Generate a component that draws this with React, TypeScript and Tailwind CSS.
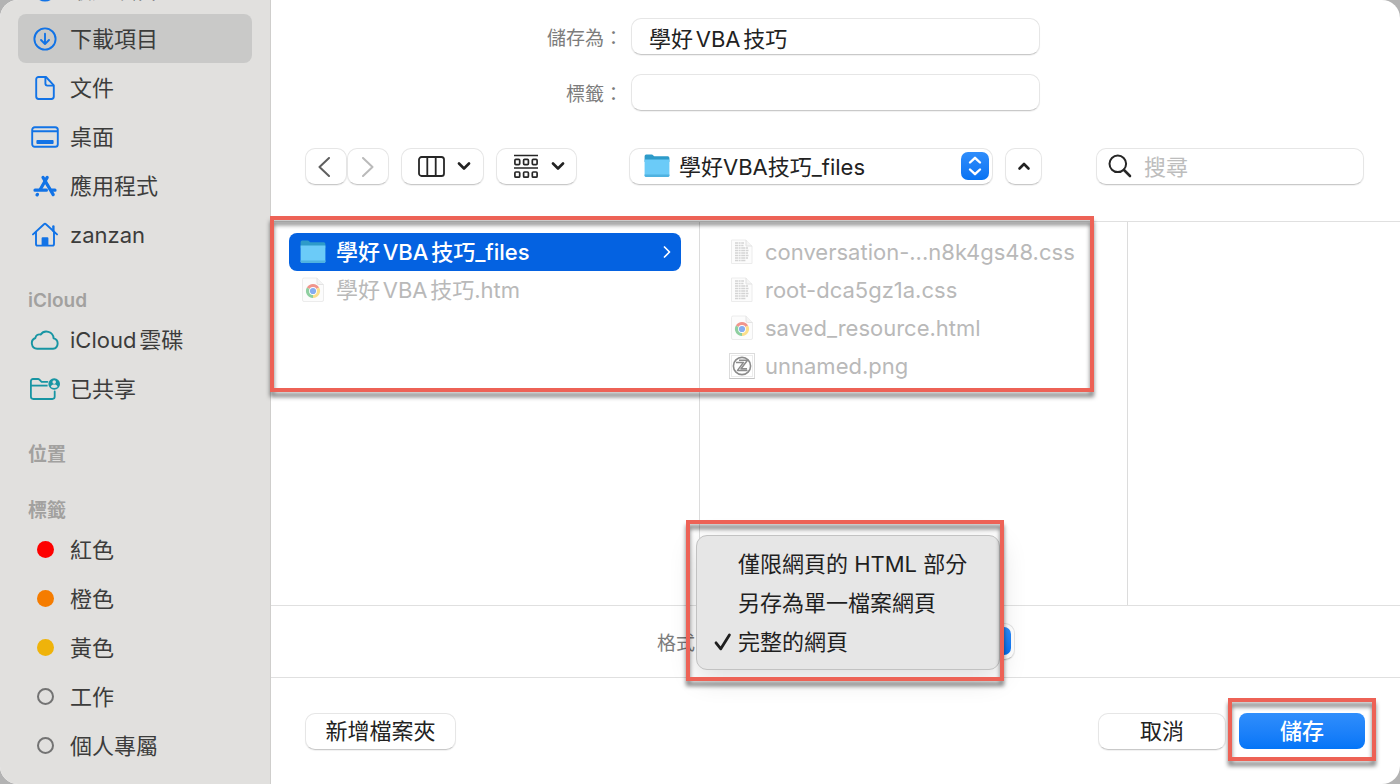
import type { ReactNode } from "react";

type IconProps = { className?: string };

function ClockIcon() {
    return (
        <svg viewBox="0 0 24 24" className="size-6" fill="none" stroke="currentColor" strokeWidth="2">
            <circle cx="12" cy="12" r="10.5" />
            <path d="M12 6v6H8" strokeLinecap="round" />
        </svg>
    );
}

function DownloadIcon() {
    return (
        <svg
            viewBox="0 0 24 24"
            className="size-6"
            fill="none"
            stroke="currentColor"
            strokeWidth="1.9"
            strokeLinecap="round"
            strokeLinejoin="round"
        >
            <circle cx="12" cy="12" r="10.6" />
            <path d="M12 6.8v10M8 13l4 4 4-4" />
        </svg>
    );
}

function DocumentIcon() {
    return (
        <svg
            viewBox="0 0 24 24"
            className="size-6"
            fill="none"
            stroke="currentColor"
            strokeWidth="1.9"
            strokeLinejoin="round"
        >
            <path d="M3.2 3.4A2.4 2.4 0 0 1 5.6 1H13l7.8 8.4v11.2a2.4 2.4 0 0 1-2.4 2.4H5.600a2.4 2.4 0 0 1-2.4-2.4z" />
            <path d="M12.4 1.2v6.4a2 2 0 0 0 2 2h6.2" />
        </svg>
    );
}

function DesktopIcon() {
    return (
        <svg viewBox="0 0 28 22" className="h-[22px] w-7" fill="none" stroke="currentColor" strokeWidth="1.9">
            <rect x="1.2" y="1.2" width="25.6" height="19.6" rx="2.6" />
            <path d="M1.2 5.2h25.6" />
            <rect x="5.4" y="14" width="17.2" height="4" rx="1" fill="currentColor" stroke="none" />
        </svg>
    );
}

function AppsIcon() {
    return (
        <svg
            viewBox="0 0 24 22"
            className="h-[22px] w-6"
            fill="none"
            stroke="currentColor"
            strokeWidth="3.2"
            strokeLinecap="round"
        >
            <path d="M14.2 2.4 7.4 14.2" />
            <path d="M10 2.4 20.2 19.6" />
            <path d="M2 15.2h11.4M18.6 15.2h3.4" />
            <path d="M4.4 19.4l-.3.5" />
        </svg>
    );
}

function HomeIcon() {
    return (
        <svg
            viewBox="0 0 26 25"
            className="h-[25px] w-[26px]"
            fill="none"
            stroke="currentColor"
            strokeWidth="1.9"
            strokeLinecap="round"
            strokeLinejoin="round"
        >
            <path d="M1 12.4 12 2.2a1.4 1.4 0 0 1 2 0l11 10.2" />
            <path d="M4 10v12a1.6 1.6 0 0 0 1.6 1.6h14.8A1.6 1.6 0 0 0 22 22V10" />
            <path d="M21.4 8.8V4.4" strokeWidth="2.4" />
            <path d="M9.6 23.4v-7.2a1 1 0 0 1 1-1h4.8a1 1 0 0 1 1 1v7.2z" fill="currentColor" stroke="none" />
        </svg>
    );
}

function CloudIcon() {
    return (
        <svg
            viewBox="0 0 30 20"
            className="h-5 w-[30px]"
            fill="none"
            stroke="currentColor"
            strokeWidth="1.9"
            strokeLinejoin="round"
        >
            <path d="M7.2 18.8a5.6 5.6 0 0 1-1.8-10.8 4 4 0 0 1 5.2-3.4 7.2 7.2 0 0 1 13 3.8 5.3 5.3 0 0 1-.6 10.4z" />
        </svg>
    );
}

function SharedFolderIcon() {
    return (
        <svg viewBox="0 0 30 22" className="h-[22px] w-[30px]" fill="none" stroke="currentColor" strokeWidth="1.8">
            <path
                d="M17.4 3.8h-5.8L9.4 1.6a2 2 0 0 0-1.4-.6H3A2.1 2.1 0 0 0 .9 3.2v15.4A2.4 2.4 0 0 0 3.3 21h19a2.4 2.4 0 0 0 2.4-2.4V13.4"
                strokeLinecap="round"
            />
            <path d="M1 7.6h16.6" />
            <circle cx="24.2" cy="6" r="5.8" fill="currentColor" stroke="none" />
            <circle cx="24.2" cy="4.1" r="1.8" fill="#e1e0de" stroke="none" />
            <path d="M20.8 9c.4-1.8 1.8-2.4 3.400-2.400s3 .6 3.400 2.400c-1.800 1.400-5 1.400-6.800 0z" fill="#e1e0de" stroke="none" />
        </svg>
    );
}

function FolderIcon({ className = "" }: IconProps) {
    return (
        <svg viewBox="0 0 26 24" className={`h-6 w-[26px] ${className}`}>
            <path d="M.6 2.2A1.6 1.6 0 0 1 2.2.6h5.4c.8 0 1.2.3 1.7.8l1 .9h13.5a1.6 1.6 0 0 1 1.6 1.6V8H.6z" fill="#2e9bc9" />
            <path d="M.6 5.6h24.8v16A1.4 1.4 0 0 1 24 23H2a1.4 1.4 0 0 1-1.4-1.4z" fill="#6bcbf8" />
            <path d="M.6 20.4h24.8v1.2A1.4 1.4 0 0 1 24 23H2a1.4 1.4 0 0 1-1.4-1.4z" fill="#4fb2e0" />
        </svg>
    );
}

function ChromeFileIcon() {
    return (
        <svg viewBox="0 0 26 26" className="size-[26px]">
            <path d="M2.5 2.5A1.5 1.5 0 0 1 4 1h13l6.500 6.500V23a1.5 1.5 0 0 1-1.5 1.5H4A1.5 1.5 0 0 1 2.5 23z" fill="#fcfcfc" stroke="#ececec" />
            <path d="M17 1v5a1.5 1.5 0 0 0 1.5 1.5h5" fill="#f4f4f4" stroke="#e4e4e4" />
            <path d="M13 14 6.9 10.5A7 7 0 0 1 19.1 10.5z" fill="#f0958c" />
            <path d="M13 14 6.9 10.5A7 7 0 0 0 13 21z" fill="#8fcfa0" />
            <path d="M13 14 19.1 10.5A7 7 0 0 1 13 21z" fill="#fbdf8c" />
            <circle cx="13" cy="14" r="3.9" fill="#fff" />
            <circle cx="13" cy="14" r="3.1" fill="#86adf0" />
        </svg>
    );
}

function CssFileIcon() {
    return (
        <svg viewBox="0 0 26 26" className="size-[26px]" fill="none">
            <path d="M2.5 1H17l6 6v17.5H2.5z" fill="#fcfcfc" stroke="#ececec" />
            <path d="M17 1v6h6" fill="#f5f5f5" stroke="#e2e2e2" />
            <path
                d="M6 4h9M6 6.5h8.5M6 9h13M6 11.5h13.5M6 14h13M6 16.5h13.5M6 19h13M6 21.5h11"
                stroke="#d4d4d4"
                strokeWidth="1.3"
                strokeDasharray="3 .6 2 .6 4 .6"
            />
        </svg>
    );
}

function PngFileIcon() {
    return (
        <svg viewBox="0 0 26 26" className="size-[26px]" fill="none">
            <rect x=".5" y=".5" width="25" height="25" fill="#fff" stroke="#dcdcdc" />
            <path d="M.5 25.5h25" stroke="#c4c4c4" />
            <rect x="2.5" y="2.5" width="21" height="21" stroke="#ececec" />
            <circle cx="13" cy="13" r="8.6" stroke="#8c8c8c" strokeWidth="1.6" />
            <path
                d="M7 9.4h7.5l-6 8h10M10 7.2h8.500l-6.500 8.600h6"
                stroke="#8c8c8c"
                strokeWidth="1.500"
                strokeLinejoin="round"
            />
        </svg>
    );
}

function Chevron({ d = "M2 1.5 7 6.5l5-5" }: { d?: string }) {
    return (
        <svg
            viewBox="0 0 14 9"
            className="h-[9px] w-3.5"
            fill="none"
            stroke="currentColor"
            strokeWidth="2.6"
            strokeLinecap="round"
            strokeLinejoin="round"
        >
            <path d={d} />
        </svg>
    );
}

function SelectKnob() {
    return (
        <span className="pointer-events-none absolute top-1 right-1 flex size-7 items-center justify-center rounded-[7px] bg-linear-to-b from-[#2f8dfb] to-[#0573f3] text-white">
            <svg
                viewBox="0 0 14 20"
                className="h-5 w-3.5"
                fill="none"
                stroke="currentColor"
                strokeWidth="2.4"
                strokeLinecap="round"
                strokeLinejoin="round"
            >
                <path d="M2 6.5 7 1.8l5 4.7M2 13.5l5 4.7 5-4.7" />
            </svg>
        </span>
    );
}

// Red frame with its soft grey shadow, laid over the part it points at
function Highlight({ className }: { className: string }) {
    return (
        <div
            aria-hidden="true"
            className={`pointer-events-none absolute z-20 border-4 border-[#ed6256] drop-shadow-[0_5px_2px_rgba(0,0,0,0.5)] ${className}`}
        />
    );
}

function SidebarHeading({ children }: { children: ReactNode }) {
    return (
        <h2 className="mt-6 flex h-8 shrink-0 items-center pt-1 pl-7 text-[19px] font-semibold text-[#a2a19f]">
            {children}
        </h2>
    );
}

function SidebarItem({ icon, label, active }: { icon: ReactNode; label: string; active?: boolean }) {
    return (
        <a
            href="#"
            className={`mx-[18px] flex h-[49px] shrink-0 items-center rounded-lg text-[#3c3c3b] ${active ? "bg-[#c9c9c8]" : ""}`}
        >
            <span className="flex w-[52px] justify-center pl-0.5">{icon}</span>
            {label}
        </a>
    );
}

const favourites = [
    { label: "最近項目", icon: <ClockIcon /> },
    { label: "下載項目", icon: <DownloadIcon />, active: true },
    { label: "文件", icon: <DocumentIcon /> },
    { label: "桌面", icon: <DesktopIcon /> },
    { label: "應用程式", icon: <AppsIcon /> },
    { label: "zanzan", icon: <HomeIcon /> },
];

const tags = [
    { label: "紅色", dot: "bg-[#fd0100]" },
    { label: "橙色", dot: "bg-[#f57c00]" },
    { label: "黃色", dot: "bg-[#efb30a]" },
    { label: "工作", dot: "border-2 border-[#737373]" },
    { label: "個人專屬", dot: "border-2 border-[#737373]" },
];

const files = [
    { name: "conversation-...n8k4gs48.css", icon: <CssFileIcon /> },
    { name: "root-dca5gz1a.css", icon: <CssFileIcon /> },
    { name: "saved_resource.html", icon: <ChromeFileIcon /> },
    { name: "unnamed.png", icon: <PngFileIcon /> },
];

const formats = ["僅限網頁的 HTML 部分", "另存為單一檔案網頁", "完整的網頁"];

function Sidebar() {
    return (
        <aside className="flex w-[271px] shrink-0 flex-col justify-end overflow-hidden border-r border-[#cfcecc] bg-[#e1e0de] pb-3.5">
            <nav aria-label="側邊欄" className="flex flex-col">
                <div className="flex flex-col [&_svg]:text-[#1273e6]">
                    {favourites.map((item) => (
                        <SidebarItem key={item.label} {...item} />
                    ))}
                </div>
                <SidebarHeading>iCloud</SidebarHeading>
                <div className="flex flex-col [&_svg]:text-[#1795a3]">
                    <SidebarItem icon={<CloudIcon />} label="iCloud雲碟" />
                    <SidebarItem icon={<SharedFolderIcon />} label="已共享" />
                </div>
                <SidebarHeading>位置</SidebarHeading>
                <SidebarHeading>標籤</SidebarHeading>
                {tags.map(({ label, dot }) => (
                    <SidebarItem
                        key={label}
                        label={label}
                        icon={<span className={`size-[17px] rounded-full ${dot}`} />}
                    />
                ))}
            </nav>
        </aside>
    );
}

const control = "rounded-[10px] border border-[#e6e6e6] border-b-[#c9c9c9] bg-white shadow-[0_1px_1px_rgba(0,0,0,0.06)]";

function SaveForm() {
    return (
        <div className="grid grid-cols-[352px_409px] items-center gap-x-2 gap-y-[19px] pt-[18px]">
            <label htmlFor="name" className="pt-1 text-right text-[19px] text-[#7c7c7c]">
                儲存為：
            </label>
            <input
                id="name"
                type="text"
                defaultValue="學好VBA技巧"
                className={`h-[37px] px-[17px] outline-none ${control}`}
            />
            <label htmlFor="tags" className="pt-1 text-right text-[19px] text-[#7c7c7c]">
                標籤：
            </label>
            <input id="tags" type="text" className={`h-[37px] px-[17px] outline-none ${control}`} />
        </div>
    );
}

function Toolbar() {
    return (
        <div className="flex items-center pr-9 pl-[34px]">
            <button type="button" aria-label="上一頁" className={`flex h-[37px] w-[42px] items-center justify-center pr-1 ${control}`}>
                <svg
                    viewBox="0 0 12 20"
                    className="h-5 w-3"
                    fill="none"
                    stroke="#5f5f5f"
                    strokeWidth="2"
                    strokeLinecap="round"
                    strokeLinejoin="round"
                >
                    <path d="M11 1 1.5 10l9.5 9" />
                </svg>
            </button>
            <button type="button" aria-label="下一頁" className={`flex h-[37px] w-[42px] items-center justify-center ${control}`}>
                <svg
                    viewBox="0 0 12 20"
                    className="h-5 w-3"
                    fill="none"
                    stroke="#bababa"
                    strokeWidth="2"
                    strokeLinecap="round"
                    strokeLinejoin="round"
                >
                    <path d="m1 1 9.5 9L1 19" />
                </svg>
            </button>
            <button
                type="button"
                aria-label="直欄顯示方式"
                className={`ml-3 flex h-[37px] w-[83px] items-center justify-center gap-3 pl-1 ${control}`}
            >
                <svg viewBox="0 0 27 21" className="h-[21px] w-[27px]" fill="none" stroke="#262626" strokeWidth="1.8">
                    <rect x="1" y="1" width="25" height="19" rx="2.6" />
                    <path d="M9.3 1v19M17.7 1v19" />
                </svg>
                <Chevron />
            </button>
            <button
                type="button"
                aria-label="分組方式"
                className={`ml-3 flex h-[37px] w-[81px] items-center justify-center gap-3 pl-1 ${control}`}
            >
                <svg viewBox="0 0 26 26" className="size-[26px]" fill="none" stroke="#262626" strokeWidth="1.7">
                    <path d="M1 1.5h24M1 14h24" />
                    <rect x="1.9" y="5.4" width="4.8" height="5.2" rx="1" />
                    <rect x="10.6" y="5.4" width="4.8" height="5.2" rx="1" />
                    <rect x="19.3" y="5.4" width="4.8" height="5.2" rx="1" />
                    <rect x="1.9" y="18" width="4.8" height="5.2" rx="1" />
                    <rect x="10.6" y="18" width="4.8" height="5.2" rx="1" />
                    <rect x="19.3" y="18" width="4.8" height="5.2" rx="1" />
                </svg>
                <Chevron />
            </button>
            <div className="relative ml-[52px] w-[364px]">
                <FolderIcon className="pointer-events-none absolute top-1.5 left-[15px]" />
                <select
                    aria-label="檔案夾"
                    className={`block h-[37px] w-full appearance-none pr-9 pl-[49px] outline-none [text-autospace:normal] ${control}`}
                >
                    <option className="[text-autospace:normal]">學好VBA技巧_files</option>
                </select>
                <SelectKnob />
            </div>
            <button
                type="button"
                aria-label="收合"
                className={`ml-3 flex size-[37px] items-center justify-center ${control}`}
            >
                <Chevron d="M2.5 6.5 7 2l4.500 4.500" />
            </button>
            <div className="relative ml-auto w-[268px]">
                <svg
                    viewBox="0 0 24 24"
                    className="absolute top-1.5 left-3 size-6"
                    fill="none"
                    stroke="#262626"
                    strokeWidth="2"
                    strokeLinecap="round"
                >
                    <circle cx="9.8" cy="9.8" r="8.3" />
                    <path d="m16 16 6 6" strokeWidth="2.6" />
                </svg>
                <input
                    type="search"
                    aria-label="搜尋"
                    placeholder="搜尋"
                    className={`block h-[37px] w-full pr-3 pl-[47px] outline-none placeholder:text-[#bdbdbd] ${control}`}
                />
            </div>
        </div>
    );
}

function FileBrowser() {
    return (
        <div className="relative flex min-h-0 flex-1 border-y border-[#e0e0e0]">
            <ul className="w-[429px] border-r border-[#dcdcdc] px-[18px] pt-[11px]">
                <li>
                    <button
                        type="button"
                        className="flex h-[38px] w-full items-center gap-2.5 rounded-lg bg-[#0462e1] pr-2.5 pl-[11px] font-medium text-white"
                    >
                        <FolderIcon />
                        學好VBA技巧_files
                        <svg
                            viewBox="0 0 8 12"
                            className="ml-auto h-3 w-2"
                            fill="none"
                            stroke="currentColor"
                            strokeWidth="1.7"
                            strokeLinecap="round"
                            strokeLinejoin="round"
                        >
                            <path d="m1.5 1 5 5-5 5" />
                        </svg>
                    </button>
                </li>
                <li className="flex h-[38px] items-center gap-2.5 pl-[11px] text-[#b9b9b9]">
                    <ChromeFileIcon />
                    學好VBA技巧.htm
                </li>
            </ul>
            <ul className="w-[428px] border-r border-[#dcdcdc] pt-[11px] pl-[29px] text-[#b9b9b9]">
                {files.map((file) => (
                    <li key={file.name} className="flex h-[38px] items-center gap-2.5">
                        {file.icon}
                        {file.name}
                    </li>
                ))}
            </ul>
            <Highlight className="-top-[6px] -left-px h-[176px] w-[824px]" />
        </div>
    );
}

function FormatBar() {
    return (
        <div className="flex h-[72px] shrink-0 items-center border-b border-[#e0e0e0] pl-[386px]">
            <label htmlFor="format" className="w-[65px] pt-1 text-[19px] whitespace-nowrap text-[#7c7c7c]">
                格式：
            </label>
            <div className="relative w-[293px]">
                <select
                    id="format"
                    defaultValue={formats[2]}
                    className={`block h-[37px] w-full appearance-none pr-9 pl-3 outline-none ${control}`}
                >
                    {formats.map((format) => (
                        <option key={format}>{format}</option>
                    ))}
                </select>
                <SelectKnob />
                <div
                    role="menu"
                    className="absolute right-[15px] -bottom-2.5 -left-[26px] z-10 rounded-[11px] border border-[#c2c2c2] bg-[#e6e6e6] py-2 shadow-[0_8px_28px_rgba(0,0,0,0.14)]"
                >
                    {formats.map((format) => (
                        <button
                            key={format}
                            type="button"
                            role="menuitemradio"
                            aria-checked={format === formats[2]}
                            className="flex h-[39px] w-full items-center text-left whitespace-nowrap text-[#1f1f1f]"
                        >
                            <span className="w-[41px] pl-[17px]">
                                {format === formats[2] && (
                                    <svg
                                        viewBox="0 0 18 18"
                                        className="size-[18px]"
                                        fill="none"
                                        stroke="currentColor"
                                        strokeWidth="2.8"
                                        strokeLinecap="round"
                                        strokeLinejoin="round"
                                    >
                                        <path d="m2 9.8 4.8 6L15.400 2" />
                                    </svg>
                                )}
                            </span>
                            {format}
                        </button>
                    ))}
                    <Highlight className="-top-4 -right-[5px] -bottom-3 -left-[11px]" />
                </div>
            </div>
        </div>
    );
}

function Footer() {
    return (
        <div className="flex h-[106px] shrink-0 items-center pr-[35px] pl-[34px]">
            <button type="button" className={`h-[37px] w-[151px] ${control}`}>
                新增檔案夾
            </button>
            <button type="button" className={`ml-auto h-[37px] w-[128px] ${control}`}>
                取消
            </button>
            <div className="relative ml-[13px]">
                <button
                    type="button"
                    className="block h-9 w-[126px] rounded-lg bg-linear-to-b from-[#2f8efc] to-[#0375f7] font-medium text-white"
                >
                    儲存
                </button>
                <Highlight className="-inset-x-[11px] -top-[15px] -bottom-3" />
            </div>
        </div>
    );
}

export default function App() {
    return (
        <div className="h-screen bg-[#b3b3b3] font-['Inter','Noto_Sans_CJK_TC',sans-serif] text-[22px] leading-7 text-[#222] [text-autospace:normal]">
            <div className="flex h-full overflow-hidden rounded-[18px] bg-white">
                <Sidebar />
                <main className="flex min-w-0 flex-1 flex-col">
                    <div className="flex h-[221px] shrink-0 flex-col gap-[37px]">
                        <SaveForm />
                        <Toolbar />
                    </div>
                    <FileBrowser />
                    <FormatBar />
                    <Footer />
                </main>
            </div>
        </div>
    );
}
